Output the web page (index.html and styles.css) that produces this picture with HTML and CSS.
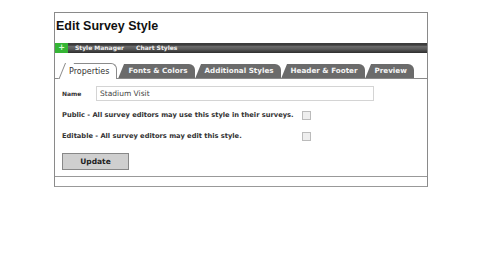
FILE: index.html
```html
<!DOCTYPE html>
<html>
<head>
<meta charset="utf-8">
<link rel="stylesheet" href="styles.css">
</head>
<body>
<div class="panel">
  <h1 class="title">Edit Survey Style</h1>
  <div class="bar">
    <span class="plus">+</span>
    <span class="crumb">Style Manager</span>
    <span class="crumb">Chart Styles</span>
  </div>
  <div class="tabs">
    <div class="tab active">Properties</div>
    <div class="tab">Fonts &amp; Colors</div>
    <div class="tab">Additional Styles</div>
    <div class="tab">Header &amp; Footer</div>
    <div class="tab">Preview</div>
  </div>
  <div class="form">
    <div class="row name-row">
      <span class="label">Name</span>
      <div class="input">Stadium Visit</div>
    </div>
    <div class="row check-row">
      <span class="label long">Public - All survey editors may use this style in their surveys.</span>
      <span class="check"></span>
    </div>
    <div class="row check-row">
      <span class="label long">Editable - All survey editors may edit this style.</span>
      <span class="check"></span>
    </div>
    <div class="btn">Update</div>
  </div>
  <div class="footer"></div>
</div>
</body>
</html>
```
FILE: styles.css
```css
html, body { margin: 0; padding: 0; background: #fff; }
body { font-family: "DejaVu Sans", Verdana, sans-serif; color: #222; }
.panel {
  margin: 12px 0 0 54px;
  width: 372px;
  border: 1px solid #8a8a8a;
  border-bottom-color: #999;
}
.title {
  margin: 0;
  padding: 6px 0 0 1px;
  height: 30px;
  box-sizing: border-box;
  font-family: "Liberation Sans", Arial, sans-serif;
  font-size: 12.5px;
  font-weight: bold;
  color: #111;
  line-height: 15px;
}
.bar {
  height: 10px;
  display: flex;
  align-items: center;
  background: linear-gradient(#3c3c3c 0, #3c3c3c 20%, #6a6a6a 35%, #5a5a5a 60%, #2e2e2e 100%);
}
.plus {
  width: 13px;
  height: 10px;
  background: #35b535;
  color: #d8ffd8;
  font-size: 8px;
  font-weight: bold;
  line-height: 10px;
  text-align: center;
  margin-right: 7px;
}
.crumb {
  color: #f0f0f0;
  font-size: 6px;
  font-weight: bold;
  margin-right: 12px;
  line-height: 10px;
}
.tabs {
  display: flex;
  align-items: flex-end;
  margin-top: 9px;
  padding-left: 10px;
  height: 16px;
  border-bottom: 1px solid #8a8a8a;
}
.tab {
  position: relative;
  height: 14px;
  box-sizing: border-box;
  margin-right: 6px;
  padding: 0 7px 0 4px;
  background: #6b6b6b;
  color: #f4f4f4;
  font-size: 7.2px;
  font-weight: bold;
  line-height: 14px;
  border-top-right-radius: 6px;
  z-index: 1;
}
.tab::before {
  content: "";
  position: absolute;
  left: 0;
  top: 0;
  bottom: 0;
  width: 8px;
  background: #6b6b6b;
  transform: skewX(-22deg);
  transform-origin: top left;
  z-index: -1;
}
.tab.active {
  height: 16px;
  line-height: 16px;
  margin-bottom: -1px;
  margin-right: 7px;
  background: #fff;
  color: #333;
  font-weight: normal;
  font-size: 8px;
  padding: 0 7px 0 4px;
  border: 1px solid #8a8a8a;
  border-bottom: none;
  border-left: none;
}
.tab.active::before {
  background: #fff;
  border-left: 1px solid #8a8a8a;
  top: -1px;
}
.form {
  padding: 7px 0 0 7px;
  height: 98px;
  box-sizing: border-box;
  border-bottom: 1px solid #999;
}
.row { display: flex; align-items: center; }
.label { font-size: 6.7px; font-weight: bold; color: #333; }
.name-row .label { width: 34px; font-size: 6px; }
.input {
  width: 273px;
  height: 13px;
  border: 1px solid #d4d4d4;
  font-size: 7.5px;
  line-height: 13px;
  padding-left: 3px;
  color: #444;
  box-sizing: content-box;
}
.check-row { margin-top: 8px; height: 12px; }
.check-row + .check-row { margin-top: 9px; }
.long { width: 240px; }
.check {
  width: 7px;
  height: 7px;
  border: 1px solid #bbb;
  background: #eee;
}
.btn {
  margin-top: 11px;
  width: 65px;
  height: 15px;
  border: 1px solid #888;
  background: #cfcfcf;
  font-size: 7.5px;
  font-weight: bold;
  text-align: center;
  line-height: 15px;
  color: #222;
}
.footer { height: 9px; }
```
